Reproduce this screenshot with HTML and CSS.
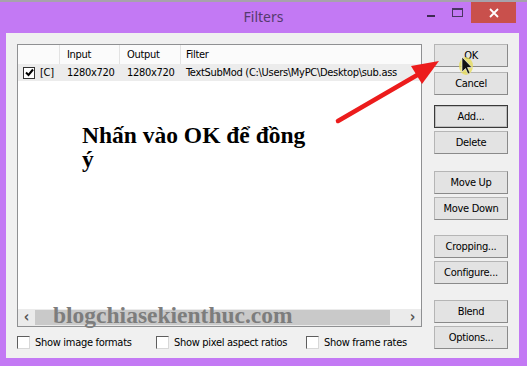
FILE: index.html
```html
<!DOCTYPE html>
<html lang="en">
<head>
  <meta charset="UTF-8">
  <title>Filters</title>
  <link rel="stylesheet" href="styles.css">
</head>
<body>

  <div class="window">
    <div class="titlebar">
      <div class="title">Filters</div>
      <div class="caption-btns">
        <span class="cap-min"></span>
        <span class="cap-max"></span>
        <span class="cap-close">
          <svg width="10" height="10" viewBox="0 0 10 10"><path d="M1 1 L9 9 M9 1 L1 9" stroke="#fff" stroke-width="1.8"/></svg>
        </span>
      </div>
    </div>

    <div class="client">
      <div class="main">
        <div class="listview">
          <div class="lv-header">
            <div class="col c0"></div>
            <div class="col c1">Input</div>
            <div class="col c2">Output</div>
            <div class="col c3">Filter</div>
          </div>
          <div class="lv-row selected">
            <div class="col c0">
              <span class="chk">
                <svg width="9" height="9" viewBox="0 0 9 9"><path d="M1 4.5 L3.5 7 L8 1.5" fill="none" stroke="#000" stroke-width="2"/></svg>
              </span>[C]
            </div>
            <div class="col c1">1280x720</div>
            <div class="col c2">1280x720</div>
            <div class="col c3">TextSubMod (C:\Users\MyPC\Desktop\sub.ass</div>
          </div>
          <div class="lv-body"></div>
          <div class="hscroll">
            <span class="sb-arrow">&lsaquo;</span>
            <div class="sb-track"><div class="sb-thumb"></div></div>
            <span class="sb-arrow">&rsaquo;</span>
          </div>
        </div>

        <div class="options-row">
          <label class="opt opt-1"><span class="box"></span>Show image formats</label>
          <label class="opt opt-2"><span class="box"></span>Show pixel aspect ratios</label>
          <label class="opt"><span class="box"></span>Show frame rates</label>
        </div>
      </div>

      <div class="btn-col">
        <button class="btn">OK</button>
        <button class="btn m5">Cancel</button>
        <button class="btn focus m10">Add...</button>
        <button class="btn m3">Delete</button>
        <button class="btn m17">Move Up</button>
        <button class="btn m3">Move Down</button>
        <button class="btn m15">Cropping...</button>
        <button class="btn m3">Configure...</button>
        <button class="btn m16">Blend</button>
        <button class="btn m3">Options...</button>
      </div>
    </div>

    <!-- annotations drawn on top of the screenshot -->
    <div class="note">Nhấn vào OK để đồng ý</div>
    <div class="watermark">blogchiasekienthuc.com</div>
    <svg class="overlay" width="527" height="366" viewBox="0 0 527 366">
      <line x1="338" y1="121" x2="419" y2="74" stroke="#ec1c1c" stroke-width="4.5" stroke-linecap="round"/>
      <polygon points="439,61 411,66 422,84" fill="#ec1c1c"/>
      <ellipse cx="466" cy="66" rx="7" ry="9" fill="#e6dc5a" opacity="0.8"/>
      <polygon points="462,57 462,72 465.5,68.5 468,74 470,73 467.5,67.5 472,67.5" fill="#111" stroke="#fff" stroke-width="0.6"/>
    </svg>
  </div>

</body>
</html>
```

FILE: styles.css
```css
body {
  margin: 0;
  font-family: "DejaVu Sans Condensed", "Liberation Sans", sans-serif;
  font-size: 11px;
  letter-spacing: -0.3px;
  color: #000;
}

.window {
  position: relative;
  width: 527px;
  height: 366px;
  background-color: #c379f4;
  border-top: 2px solid #a7a2ab;
  box-sizing: border-box;
  overflow: hidden;
}

.titlebar {
  height: 31px;
  position: relative;
}

.title {
  text-align: center;
  padding-top: 5px;
  font-family: "Noto Sans", sans-serif;
  font-size: 14px;
  letter-spacing: 0;
  color: #553a6e;
}

.caption-btns {
  position: absolute;
  top: 0;
  right: 11px;
  display: flex;
  align-items: flex-start;
}

.cap-min {
  width: 8px;
  height: 2px;
  background-color: #3d2a52;
  margin: 13px 17px 0 0;
}

.cap-max {
  width: 9px;
  height: 6px;
  border: 1px solid #4a3563;
  border-top-width: 2px;
  margin: 6px 8px 0 0;
}

.cap-close {
  width: 45px;
  height: 21px;
  background-color: #c9504c;
  display: flex;
  justify-content: center;
  align-items: center;
}

.client {
  display: flex;
  gap: 12px;
  margin-left: 6px;
  width: 513px;
  height: 325px;
  padding: 11px 11px 0 11px;
  box-sizing: border-box;
  background-color: #f0f0f0;
}

.main {
  width: 405px;
  display: flex;
  flex-direction: column;
}

.listview {
  height: 283px;
  border: 1px solid #8f9092;
  background-color: #fff;
  display: flex;
  flex-direction: column;
  box-sizing: border-box;
}

.lv-header,
.lv-row {
  display: flex;
  white-space: nowrap;
  overflow: hidden;
}

.lv-header {
  height: 19px;
  line-height: 19px;
  background-color: #fbfbfb;
}

.lv-header .col {
  border-right: 1px solid #e3e3e3;
}

.lv-row {
  height: 17px;
  line-height: 17px;
}

.lv-row.selected {
  background-color: #ececec;
}

.col {
  box-sizing: border-box;
  overflow: hidden;
  padding-left: 7px;
}

.c0 {
  width: 42px;
  padding-left: 5px;
  display: flex;
  align-items: center;
}

.c1 {
  width: 60px;
}

.c2 {
  width: 61px;
}

.c3 {
  flex: 1;
  padding-left: 5px;
}

.lv-header .c3 {
  border-right: none;
}

.chk {
  width: 10px;
  height: 10px;
  border: 1px solid #333;
  background-color: #fff;
  margin-right: 5px;
  display: flex;
  justify-content: center;
  align-items: center;
}

.lv-body {
  flex: 1;
}

.hscroll {
  height: 17px;
  display: flex;
  align-items: center;
  background-color: #ebebeb;
}

.sb-arrow {
  width: 17px;
  text-align: center;
  font-size: 15px;
  font-weight: bold;
  color: #555;
  line-height: 17px;
}

.sb-track {
  flex: 1;
  height: 17px;
  padding-right: 14px;
  box-sizing: border-box;
}

.sb-thumb {
  height: 15px;
  margin-top: 1px;
  background-color: #c9c9c9;
}

.options-row {
  display: flex;
  align-items: center;
  margin-top: 8px;
  height: 14px;
}

.opt {
  display: flex;
  align-items: center;
  white-space: nowrap;
}

.opt-1 {
  width: 139px;
}

.opt-2 {
  width: 150px;
}

.box {
  width: 11px;
  height: 11px;
  border: 1px solid;
  border-color: #5e5e5e #d8d8d8 #d8d8d8 #5e5e5e;
  background-color: #fff;
  margin-right: 5px;
}

.btn-col {
  width: 74px;
  display: flex;
  flex-direction: column;
}

.btn {
  height: 23px;
  padding: 0;
  font-family: inherit;
  font-size: 11px;
  letter-spacing: -0.3px;
  color: #000;
  background-color: #e3e3e3;
  border: 1px solid;
  border-color: #b5b5b5 #8a8a8a #8a8a8a #b5b5b5;
}

.btn.focus {
  border-color: #3a3a3a;
  box-shadow: inset 0 0 0 1px #bdbdbd;
}

.m3 { margin-top: 3px; }
.m5 { margin-top: 5px; }
.m10 { margin-top: 10px; }
.m15 { margin-top: 15px; }
.m16 { margin-top: 16px; }
.m17 { margin-top: 17px; }

.note {
  position: absolute;
  left: 82px;
  top: 121px;
  width: 234px;
  font-family: "Liberation Serif", serif;
  font-weight: bold;
  font-size: 23.5px;
  line-height: 24px;
  letter-spacing: 0;
}

.watermark {
  position: absolute;
  left: 53px;
  top: 301px;
  font-family: "Liberation Serif", serif;
  font-weight: bold;
  font-size: 23.5px;
  line-height: 24px;
  letter-spacing: 0;
  color: #7d7d7d;
}

.overlay {
  position: absolute;
  left: 0;
  top: -2px;
  pointer-events: none;
}
```
